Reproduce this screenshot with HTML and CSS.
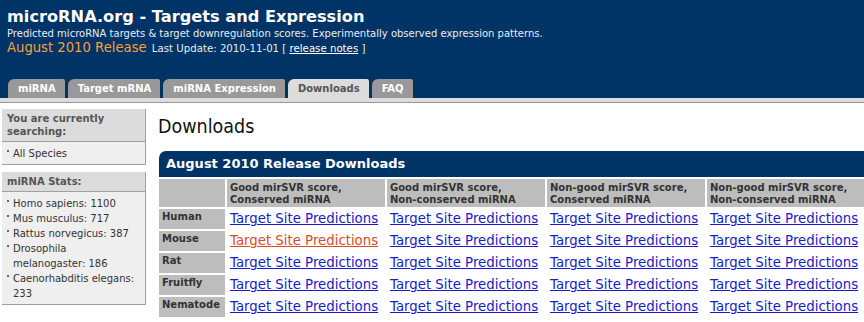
FILE: index.html
```html
<!DOCTYPE html>
<html lang="en">
  <head>
    <meta charset="UTF-8" />
    <title>microRNA.org - Downloads</title>
    <link rel="stylesheet" href="styles.css">
  </head>
  <body>
    <div class="header">
      <h1>microRNA.org - Targets and Expression</h1>
      <p class="tagline">Predicted microRNA targets &amp; target downregulation scores. Experimentally observed expression patterns.</p>
      <p class="release">
        <span class="release-name">August 2010 Release</span>
        Last Update: 2010-11-01 [ <a href="#">release notes</a> ]
      </p>
      <ul class="tabs">
        <li><a href="#">miRNA</a></li>
        <li><a href="#">Target mRNA</a></li>
        <li><a href="#">miRNA Expression</a></li>
        <li class="active"><a href="#">Downloads</a></li>
        <li><a href="#">FAQ</a></li>
      </ul>
    </div>
    <div class="tabstrip"></div>

    <div class="layout">
      <div class="sidebar">
        <div class="box">
          <div class="box-title">You are currently searching:</div>
          <ul class="box-list">
            <li>All Species</li>
          </ul>
        </div>
        <div class="box">
          <div class="box-title">miRNA Stats:</div>
          <ul class="box-list">
            <li>Homo sapiens: 1100</li>
            <li>Mus musculus: 717</li>
            <li>Rattus norvegicus: 387</li>
            <li>Drosophila melanogaster: 186</li>
            <li>Caenorhabditis elegans: 233</li>
          </ul>
        </div>
      </div>

      <div class="content">
        <h2>Downloads</h2>
        <div class="downloads">
          <div class="downloads-title">August 2010 Release Downloads</div>
          <table class="dl-table">
            <colgroup>
              <col class="col-species">
              <col class="col-link">
              <col class="col-link">
              <col class="col-link">
              <col class="col-link">
            </colgroup>
            <thead>
              <tr>
                <th></th>
                <th>Good mirSVR score,<br>Conserved miRNA</th>
                <th>Good mirSVR score,<br>Non-conserved miRNA</th>
                <th>Non-good mirSVR score,<br>Conserved miRNA</th>
                <th>Non-good mirSVR score,<br>Non-conserved miRNA</th>
              </tr>
            </thead>
            <tbody id="dl-body"></tbody>
          </table>
        </div>
      </div>
    </div>

    <script>
      // species rows, each gets one link per score/conservation column
      const SPECIES = ["Human", "Mouse", "Rat", "Fruitfly", "Nematode"];
      const COLUMNS = 4;
      const body = document.getElementById("dl-body");

      SPECIES.forEach((name) => {
        const tr = document.createElement("tr");
        const th = document.createElement("th");
        th.textContent = name;
        tr.appendChild(th);
        for (let c = 0; c < COLUMNS; c++) {
          const td = document.createElement("td");
          const a = document.createElement("a");
          a.href = "#";
          a.textContent = "Target Site Predictions";
          // the one already downloaded shows as visited
          if (name === "Mouse" && c === 0) a.classList.add("visited");
          td.appendChild(a);
          tr.appendChild(td);
        }
        body.appendChild(tr);
      });
    </script>
  </body>
</html>
```

FILE: styles.css
```css
html {
  overflow: hidden;
}
body {
  font-family: "DejaVu Sans", Verdana, sans-serif;
  background: #fff;
  color: #333;
  margin: 0;
  padding: 0;
}
.header {
  background: #003366;
  color: #fff;
  padding: 6px 0 0 7px;
}
.header h1 {
  margin: 0;
  font-size: 16.2px;
  line-height: 22px;
  font-weight: bold;
}
.tagline {
  margin: 0;
  font-size: 10px;
  line-height: 12px;
  color: #e8eef4;
}
.release {
  margin: 0;
  font-size: 10.2px;
  line-height: 16px;
  color: #e8eef4;
}
.release-name {
  color: #f2a23a;
  font-size: 13.2px;
  margin-right: 2px;
}
.release a {
  color: #fff;
}
.tabs {
  list-style: none;
  margin: 22px 0 0 1px;
  padding: 0;
  display: flex;
  gap: 3px;
}
.tabs li {
  background: #999;
  border-radius: 6px 2px 0 0;
  height: 19px;
}
.tabs li a {
  display: block;
  padding: 0 9px 0 10px;
  font-size: 10px;
  font-weight: bold;
  line-height: 19px;
  color: #fff;
  text-decoration: none;
}
.tabs li.active {
  background: #dcdcdc;
}
.tabs li.active a {
  color: #555;
}
.tabstrip {
  height: 4px;
  background: #dcdcdc;
  border-bottom: 1px solid #999;
}
.layout {
  display: flex;
  gap: 12px;
  padding: 6px 0 0 2px;
}
.sidebar {
  width: 144px;
  flex-shrink: 0;
  display: flex;
  flex-direction: column;
  gap: 7px;
}
.box {
  background: #efefef;
  border-right: 1px solid #a0a0a0;
  border-bottom: 1px solid #a0a0a0;
}
.box-title {
  background: #dcdcdc;
  border-bottom: 1px solid #a0a0a0;
  color: #555;
  font-size: 10px;
  font-weight: bold;
  line-height: 13px;
  padding: 3px 5px 3px 5px;
}
.box-list {
  list-style: none;
  margin: 0;
  padding: 4px 4px 3px 3px;
}
.box-list li {
  font-size: 10px;
  line-height: 15px;
  color: #333;
  padding-left: 8px;
  background: linear-gradient(#666, #666) no-repeat 2px 4px / 2px 2px;
}
.content {
  flex: 1;
  min-width: 0;
}
.content h2 {
  margin: 6px 0 0 0;
  font-family: "DejaVu Sans Condensed", "DejaVu Sans", sans-serif;
  font-stretch: condensed;
  font-size: 19.5px;
  font-weight: normal;
  line-height: 24px;
  color: #111;
}
.downloads {
  width: max-content;
  margin-top: 12px;
  margin-left: 1px;
}
.downloads-title {
  background: #003366;
  color: #fff;
  font-size: 13px;
  font-weight: bold;
  line-height: 26px;
  padding-left: 7px;
  border-radius: 7px 0 0 0;
}
.dl-table {
  border-collapse: separate;
  border-spacing: 2px;
  margin: 0 0 0 -2px;
  table-layout: fixed;
}
.col-species {
  width: 66px;
}
.col-link {
  width: 158px;
}
.dl-table th {
  background: #bdbdbd;
  color: #333;
  font-size: 10px;
  font-weight: bold;
  line-height: 12px;
  text-align: left;
  vertical-align: top;
}
.dl-table thead th {
  padding: 3px 3px 1px 3px;
  height: 24px;
}
.dl-table tbody th {
  padding: 2px 3px 1px 3px;
  height: 17px;
}
.dl-table td {
  padding: 1px 3px 1px 3px;
  height: 18px;
  font-size: 13.3px;
  line-height: 18px;
  white-space: nowrap;
  vertical-align: top;
}
.dl-table td a {
  color: #1a1acc;
}
.dl-table td a.visited {
  color: #dd4b26;
}
```
